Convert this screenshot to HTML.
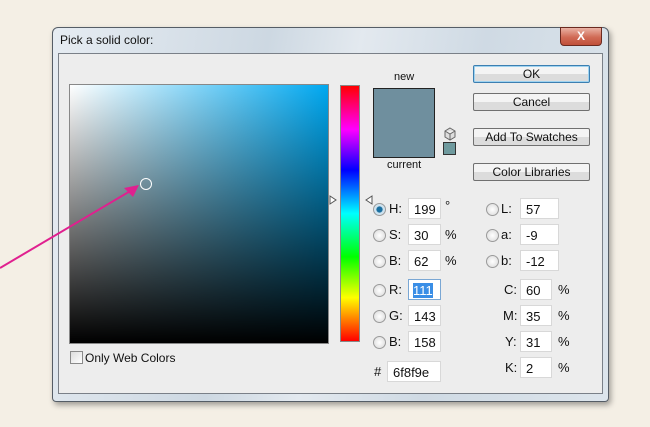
<!DOCTYPE html>
<html><head><style>
body{margin:0;width:650px;height:427px;background:#f4efe5;position:relative;overflow:hidden;font-family:"Liberation Sans",sans-serif;font-size:12px;color:#111}
.a{position:absolute}
.frame{left:52px;top:27px;width:555px;height:373px;border:1px solid #555d66;border-radius:6px 6px 4px 4px;background:linear-gradient(100deg,#e6ecf2 0%,#cdd8e2 35%,#e3e9ef 50%,#cfdae4 70%,#dde5ec 100%);box-shadow:2px 3px 6px rgba(0,0,0,.35)}
.panel{left:58px;top:53px;width:543px;height:339px;background:#ededed;border:1px solid #7a8088}
.btn{position:absolute;left:473px;width:115px;height:16px;border:1px solid #707070;border-radius:2px;background:linear-gradient(#f4f4f4 50%,#dcdcdc 50%);text-align:center;line-height:16px;font-size:12px}
.inp{position:absolute;background:#fff;border:1px solid #d8d8d8;height:18px;line-height:18px;padding-left:5px;box-sizing:border-box;font-size:13px}
.rad{position:absolute;width:11px;height:11px;border-radius:50%;border:1px solid #9a9a9a;background:radial-gradient(#fff,#d8d8d8)}
.lb{position:absolute;font-size:13px}
</style></head><body>
<div class="a frame"></div>
<div class="a" style="left:60px;top:33px;font-size:12px">Pick a solid color:</div>
<div class="a" style="left:560px;top:27px;width:40px;height:17px;border:1px solid #6b2a20;border-radius:0 0 4px 4px;background:linear-gradient(#eab2a4,#d06a55 55%,#c0503a);color:#fff;text-align:center;font-weight:bold;font-size:12px;line-height:17px">X</div>
<div class="a panel"></div>
<div class="a" style="left:69px;top:84px;width:258px;height:258px;border:1px solid #888;background:linear-gradient(to bottom,rgba(0,0,0,0),#000),linear-gradient(to right,#fff,#00a8f0)"></div>
<div class="a" style="left:140px;top:178px;width:10px;height:10px;border:1px solid #fff;border-radius:50%"></div>
<div class="a" style="left:340px;top:85px;width:20px;height:257px;border:1px solid #888;box-sizing:border-box;background:linear-gradient(#ff0000,#ff00ff 17%,#0000ff 33%,#00ffff 50%,#00ff00 67%,#ffff00 83%,#ff0000)"></div>
<svg class="a" style="left:329px;top:194px" width="45" height="12"><path d="M1 2 L7 6 L1 10 Z M43 2 L37 6 L43 10 Z" fill="#fff" stroke="#555"/></svg>
<div class="a" style="left:394px;top:71px;font-size:11px">new</div>
<div class="a" style="left:373px;top:88px;width:60px;height:68px;border:1px solid #222;background:#6f8f9e"></div>
<div class="a" style="left:387px;top:159px;font-size:11px">current</div>
<svg class="a" style="left:443px;top:127px" width="14" height="14"><path d="M7 1 L12 4 L12 10 L7 13 L2 10 L2 4 Z M2 4 L7 7 L12 4 M7 7 L7 13" fill="#ddd" stroke="#666"/></svg>
<div class="a" style="left:443px;top:142px;width:11px;height:11px;border:1px solid #333;background:#6f9a9e"></div>
<div class="btn" style="top:65px;border-color:#3c7fb1;box-shadow:0 0 0 1px #9fd3f0 inset">OK</div>
<div class="btn" style="top:93px">Cancel</div>
<div class="btn" style="top:128px">Add To Swatches</div>
<div class="btn" style="top:163px">Color Libraries</div>

<div class="rad" style="left:373px;top:203px;background:radial-gradient(#1a6fa0 35%,#cfe3ef 45%)"></div>
<div class="rad" style="left:373px;top:229px"></div>
<div class="rad" style="left:373px;top:255px"></div>
<div class="rad" style="left:373px;top:284px"></div>
<div class="rad" style="left:373px;top:310px"></div>
<div class="rad" style="left:373px;top:336px"></div>
<div class="lb" style="left:389px;top:201px">H:</div>
<div class="lb" style="left:389px;top:227px">S:</div>
<div class="lb" style="left:389px;top:253px">B:</div>
<div class="lb" style="left:389px;top:282px">R:</div>
<div class="lb" style="left:389px;top:308px">G:</div>
<div class="lb" style="left:389px;top:334px">B:</div>
<div class="inp" style="left:408px;top:198px;width:33px;height:21px;line-height:21px">199</div>
<div class="inp" style="left:408px;top:224px;width:33px;height:21px;line-height:21px">30</div>
<div class="inp" style="left:408px;top:250px;width:33px;height:21px;line-height:21px">62</div>
<div class="inp" style="left:408px;top:279px;width:33px;height:21px;line-height:21px;border-color:#7aa7d4;padding-left:4px"><span style="background:#3a8ee6;color:#fff">111</span></div>
<div class="inp" style="left:408px;top:305px;width:33px;height:21px;line-height:21px">143</div>
<div class="inp" style="left:408px;top:331px;width:33px;height:21px;line-height:21px">158</div>
<div class="lb" style="left:445px;top:198px">°</div>
<div class="lb" style="left:445px;top:227px">%</div>
<div class="lb" style="left:445px;top:253px">%</div>
<div class="lb" style="left:374px;top:364px">#</div>
<div class="inp" style="left:387px;top:361px;width:54px;height:21px;line-height:21px">6f8f9e</div>

<div class="rad" style="left:486px;top:203px"></div>
<div class="rad" style="left:486px;top:229px"></div>
<div class="rad" style="left:486px;top:255px"></div>
<div class="lb" style="left:501px;top:201px">L:</div>
<div class="lb" style="left:501px;top:227px">a:</div>
<div class="lb" style="left:501px;top:253px">b:</div>
<div class="inp" style="left:520px;top:198px;width:39px;height:21px;line-height:21px">57</div>
<div class="inp" style="left:520px;top:224px;width:39px;height:21px;line-height:21px">-9</div>
<div class="inp" style="left:520px;top:250px;width:39px;height:21px;line-height:21px">-12</div>
<div class="lb" style="left:504px;top:282px">C:</div>
<div class="lb" style="left:503px;top:308px">M:</div>
<div class="lb" style="left:505px;top:334px">Y:</div>
<div class="lb" style="left:505px;top:360px">K:</div>
<div class="inp" style="left:520px;top:279px;width:32px;height:21px;line-height:21px">60</div>
<div class="inp" style="left:520px;top:305px;width:32px;height:21px;line-height:21px">35</div>
<div class="inp" style="left:520px;top:331px;width:32px;height:21px;line-height:21px">31</div>
<div class="inp" style="left:520px;top:357px;width:32px;height:21px;line-height:21px">2</div>
<div class="lb" style="left:558px;top:282px">%</div>
<div class="lb" style="left:558px;top:308px">%</div>
<div class="lb" style="left:558px;top:334px">%</div>
<div class="lb" style="left:558px;top:360px">%</div>

<div class="a" style="left:70px;top:351px;width:11px;height:11px;border:1px solid #8a8a8a;background:linear-gradient(135deg,#ddd,#fff)"></div>
<div class="a" style="left:85px;top:351px;font-size:12px">Only Web Colors</div>

<svg class="a" style="left:0;top:0" width="650" height="427"><line x1="0" y1="268" x2="132" y2="190" stroke="#e0208f" stroke-width="2"/><path d="M139 185 L124 188 L133 197 Z" fill="#e0208f"/></svg>
</body></html>
